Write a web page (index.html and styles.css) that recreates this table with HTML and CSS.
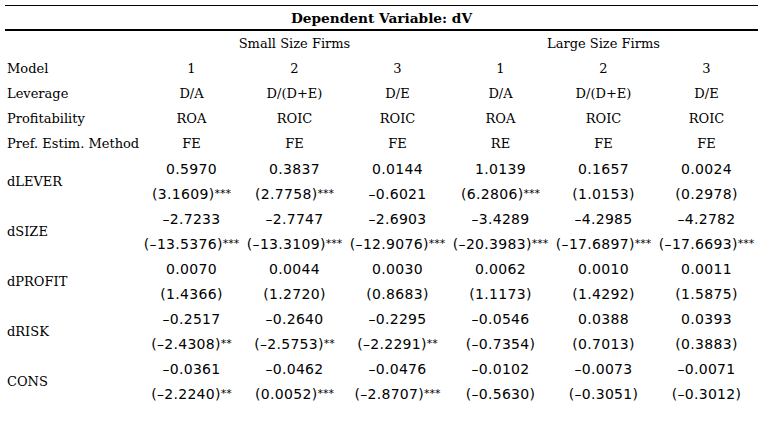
FILE: index.html
```html
<!DOCTYPE html>
<html>
<head>
<meta charset="utf-8">
<link rel="stylesheet" href="styles.css">
</head>
<body>
<table class="reg">
  <colgroup>
    <col class="c-label">
    <col class="c-data"><col class="c-data"><col class="c-data">
    <col class="c-data"><col class="c-data"><col class="c-data">
  </colgroup>
  <thead>
    <tr class="title-row"><th colspan="7">Dependent Variable: dV</th></tr>
  </thead>
  <tbody>
    <tr class="hdr"><td></td><td colspan="3">Small Size Firms</td><td colspan="3">Large Size Firms</td></tr>
    <tr class="hdr"><td class="lbl">Model</td><td>1</td><td>2</td><td>3</td><td>1</td><td>2</td><td>3</td></tr>
    <tr class="hdr"><td class="lbl">Leverage</td><td>D/A</td><td>D/(D+E)</td><td>D/E</td><td>D/A</td><td>D/(D+E)</td><td>D/E</td></tr>
    <tr class="hdr"><td class="lbl">Profitability</td><td>ROA</td><td>ROIC</td><td>ROIC</td><td>ROA</td><td>ROIC</td><td>ROIC</td></tr>
    <tr class="hdr"><td class="lbl">Pref. Estim. Method</td><td>FE</td><td>FE</td><td>FE</td><td>RE</td><td>FE</td><td>FE</td></tr>

    <tr class="num"><td class="lbl var" rowspan="2">dLEVER</td><td>0.5970</td><td>0.3837</td><td>0.0144</td><td>1.0139</td><td>0.1657</td><td>0.0024</td></tr>
    <tr class="num"><td>(3.1609)<span class="sig">***</span></td><td>(2.7758)<span class="sig">***</span></td><td>–0.6021</td><td>(6.2806)<span class="sig">***</span></td><td>(1.0153)</td><td>(0.2978)</td></tr>

    <tr class="num"><td class="lbl var" rowspan="2">dSIZE</td><td>–2.7233</td><td>–2.7747</td><td>–2.6903</td><td>–3.4289</td><td>–4.2985</td><td>–4.2782</td></tr>
    <tr class="num"><td>(–13.5376)<span class="sig">***</span></td><td>(–13.3109)<span class="sig">***</span></td><td>(–12.9076)<span class="sig">***</span></td><td>(–20.3983)<span class="sig">***</span></td><td>(–17.6897)<span class="sig">***</span></td><td>(–17.6693)<span class="sig">***</span></td></tr>

    <tr class="num"><td class="lbl var" rowspan="2">dPROFIT</td><td>0.0070</td><td>0.0044</td><td>0.0030</td><td>0.0062</td><td>0.0010</td><td>0.0011</td></tr>
    <tr class="num"><td>(1.4366)</td><td>(1.2720)</td><td>(0.8683)</td><td>(1.1173)</td><td>(1.4292)</td><td>(1.5875)</td></tr>

    <tr class="num"><td class="lbl var" rowspan="2">dRISK</td><td>–0.2517</td><td>–0.2640</td><td>–0.2295</td><td>–0.0546</td><td>0.0388</td><td>0.0393</td></tr>
    <tr class="num"><td>(–2.4308)<span class="sig">**</span></td><td>(–2.5753)<span class="sig">**</span></td><td>(–2.2291)<span class="sig">**</span></td><td>(–0.7354)</td><td>(0.7013)</td><td>(0.3883)</td></tr>

    <tr class="num"><td class="lbl var" rowspan="2">CONS</td><td>–0.0361</td><td>–0.0462</td><td>–0.0476</td><td>–0.0102</td><td>–0.0073</td><td>–0.0071</td></tr>
    <tr class="num"><td>(–2.2240)<span class="sig">**</span></td><td>(0.0052)<span class="sig">***</span></td><td>(–2.8707)<span class="sig">***</span></td><td>(–0.5630)</td><td>(–0.3051)</td><td>(–0.3012)</td></tr>
  </tbody>
</table>
</body>
</html>
```
FILE: styles.css
```css
html, body {
  margin: 0;
  padding: 0;
  background: #ffffff;
  color: #000000;
}

.reg {
  margin: 5px 0 0 5px;
  width: 753px;
  border-collapse: collapse;
  table-layout: fixed;
  font-family: "DejaVu Serif", serif;
  font-size: 13px;
}

.c-label { width: 135px; }
.c-data { width: 103px; }

.reg td, .reg th {
  padding: 0;
  text-align: center;
  white-space: nowrap;
  vertical-align: middle;
}

.title-row th {
  height: 23px;
  border-top: 1px solid #000;
  border-bottom: 2px solid #000;
  font-weight: bold;
  font-size: 13.7px;
}

.hdr td {
  height: 25px;
}

.num td {
  height: 25px;
  font-family: "DejaVu Sans", sans-serif;
  font-size: 14px;
  letter-spacing: 0.3px;
}

.sig {
  font-size: 11px;
  letter-spacing: 0;
  vertical-align: 2px;
}

.reg td.lbl {
  text-align: left;
  padding-left: 2px;
  font-family: "DejaVu Serif", serif;
  font-size: 13px;
  letter-spacing: 0;
}
```
